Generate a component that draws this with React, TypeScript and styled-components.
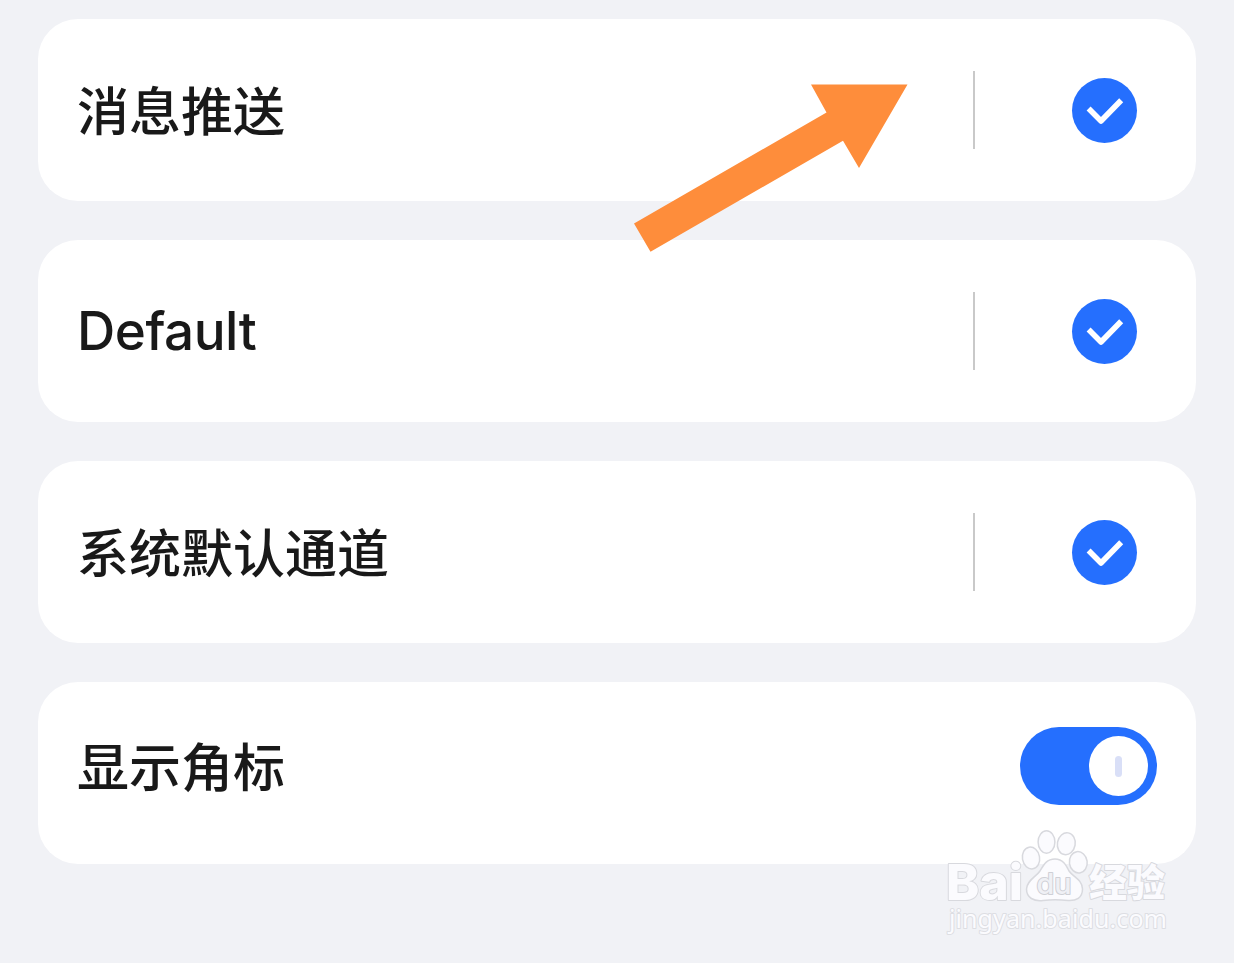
import React, { useState } from 'react';
import styled, { createGlobalStyle } from 'styled-components';

const channels = [
    { id: 'push', name: '消息推送' },
    { id: 'default', name: 'Default', latin: true },
    { id: 'system', name: '系统默认通道' },
];

const App: React.FC = () => {
    const [enabled, setEnabled] = useState<string[]>(channels.map(c => c.id));
    const [badge, setBadge] = useState(true);

    const toggleChannel = (id: string) => {
        setEnabled(prev => prev.includes(id) ? prev.filter(x => x !== id) : [...prev, id]);
    };

    return (
        <Page>
            <GlobalStyle />
            <CardList>
                {channels.map(channel => (
                    <Card key={channel.id}>
                        <Label $latin={channel.latin}>{channel.name}</Label>
                        <Divider />
                        <CheckArea>
                            <CheckButton $on={enabled.includes(channel.id)} onClick={() => toggleChannel(channel.id)}>
                                <CheckIcon viewBox="0 0 65 65">
                                    <path d="M16.6 30.6 L29 43 L49.2 22.2" />
                                </CheckIcon>
                            </CheckButton>
                        </CheckArea>
                    </Card>
                ))}
                <Card $last>
                    <Label>显示角标</Label>
                    <Switch $on={badge} onClick={() => setBadge(prev => !prev)}>
                        <Knob>
                            <KnobMark />
                        </Knob>
                    </Switch>
                </Card>
            </CardList>
            <Arrow viewBox="0 0 274 168">
                <polygon points="0,139.5 192.5,28.5 177,0.5 273.5,0.5 225,84 209,56.8 16.5,167.8" />
            </Arrow>
            <Watermark viewBox="0 0 240 120">
                <BrandText x="6" y="79.5" textLength="77" lengthAdjust="spacingAndGlyphs">Bai</BrandText>
                <Paw>
                    <ellipse cx="91" cy="38" rx="8.6" ry="11" transform="rotate(-10 91 38)" />
                    <ellipse cx="106.5" cy="22" rx="8.4" ry="11.2" />
                    <ellipse cx="126.3" cy="23.7" rx="8.9" ry="11" transform="rotate(10 126.3 23.7)" />
                    <ellipse cx="138.3" cy="42.3" rx="8.9" ry="10.7" transform="rotate(-8 138.3 42.3)" />
                    <path d="M115 39 C123 39 126 45 129 51 C133 57 142 59 142.500 69 C142.500 78 136 81 128 80.500 C119 79.500 111 79.500 103 80.500 C94 81.500 86.500 78 86.500 69 C87 60 96 57 100 51 C104 44 107 39 115 39 Z" />
                </Paw>
                <DuText x="96.5" y="74" textLength="35" lengthAdjust="spacingAndGlyphs">du</DuText>
                <BrandCn x="149" y="76" textLength="76">经验</BrandCn>
                <SiteText x="9" y="108" textLength="218">jingyan.baidu.com</SiteText>
            </Watermark>
        </Page>
    );
};

export default App;

const GlobalStyle = createGlobalStyle`
  body {
    margin: 0;
    background-color: #f1f2f6;
  }
`;

const Page = styled.div`
  position: relative;
  box-sizing: border-box;
  width: 1234px;
  height: 963px;
  padding: 19px 38px 0;
  overflow: hidden;
  background-color: #f1f2f6;
  font-family: "Noto Sans", "Noto Sans CJK SC", sans-serif;
`;

const CardList = styled.div`
  display: flex;
  flex-direction: column;
  gap: 39px;
`;

const Card = styled.div<{ $last?: boolean }>`
  display: flex;
  align-items: center;
  box-sizing: border-box;
  height: 182px;
  padding: 0 39px;
  padding-bottom: ${({ $last }) => ($last ? '14px' : '0')};
  border-radius: 40px;
  background-color: #fff;
`;

const Label = styled.div<{ $latin?: boolean }>`
  flex: 1;
  padding-bottom: ${({ $latin }) => ($latin ? '0' : '2px')};
  color: #191919;
  font-family: ${({ $latin }) => ($latin ? 'Inter' : '"Noto Sans CJK SC"')}, sans-serif;
  font-size: ${({ $latin }) => ($latin ? '53px' : '52px')};
  font-weight: 500;
  letter-spacing: ${({ $latin }) => ($latin ? '-0.5px' : '0')};
  line-height: 76px;
`;

const Divider = styled.div`
  width: 2px;
  height: 78px;
  background-color: #c9c9c9;
`;

const CheckArea = styled.div`
  display: flex;
  justify-content: flex-end;
  width: 162px;
  margin-right: 20px;
`;

const CheckButton = styled.button<{ $on: boolean }>`
  width: 65px;
  height: 65px;
  padding: 0;
  border: none;
  border-radius: 50%;
  background-color: ${({ $on }) => ($on ? '#256ffe' : '#d9dbe1')};
  cursor: pointer;
`;

const CheckIcon = styled.svg`
  display: block;
  width: 65px;
  height: 65px;
  fill: none;
  stroke: #fff;
  stroke-width: 5.6;
  stroke-linejoin: round;
`;

const Switch = styled.button<{ $on: boolean }>`
  display: flex;
  align-items: center;
  justify-content: ${({ $on }) => ($on ? 'flex-end' : 'flex-start')};
  width: 137px;
  height: 78px;
  padding: 0 9px;
  border: none;
  border-radius: 39px;
  background-color: ${({ $on }) => ($on ? '#256ffe' : '#d9dbe1')};
  cursor: pointer;
`;

const Knob = styled.span`
  display: flex;
  align-items: center;
  justify-content: center;
  width: 59px;
  height: 60px;
  border-radius: 50%;
  background-color: #fff;
`;

const KnobMark = styled.span`
  width: 7px;
  height: 21px;
  border-radius: 4px;
  background-color: #d9dff7;
`;

/* pointer drawn over the cards */
const Arrow = styled.svg`
  position: absolute;
  left: 634px;
  top: 84px;
  width: 274px;
  height: 168px;
  fill: #fe8d3b;
`;

const Watermark = styled.svg`
  position: absolute;
  left: 940px;
  top: 820px;
  width: 240px;
  height: 120px;
  fill: #fbfbfe;
  stroke: #d8d9de;
  stroke-width: 2;
  stroke-linejoin: round;
  paint-order: stroke;
`;

const Paw = styled.g`
  stroke-width: 1.5;
  paint-order: normal;
`;

const BrandText = styled.text`
  font-family: Inter, sans-serif;
  font-size: 50px;
  font-weight: 800;
`;

const DuText = styled.text`
  fill: #eff0f5;
  stroke: #cfd0d6;
  font-family: Inter, sans-serif;
  font-size: 28px;
  font-weight: 500;
`;

const BrandCn = styled.text`
  font-family: "Noto Sans CJK SC", sans-serif;
  font-size: 38px;
  font-weight: 900;
`;

const SiteText = styled.text`
  stroke: #dddee3;
  font-family: "Noto Sans", sans-serif;
  font-size: 25px;
`;
